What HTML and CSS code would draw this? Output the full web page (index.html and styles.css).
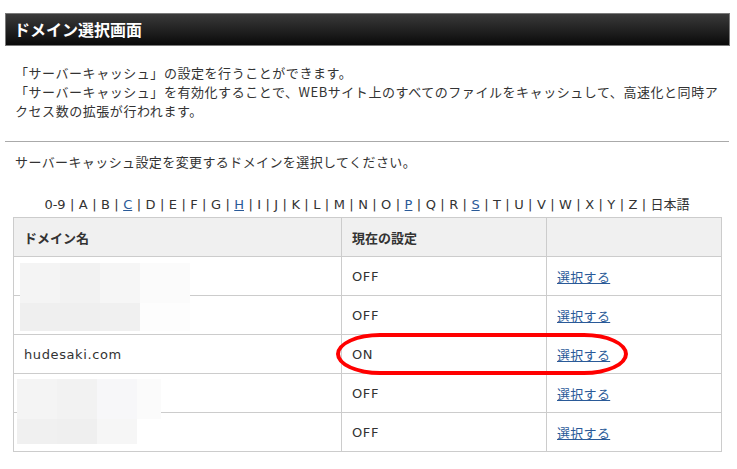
FILE: index.html
```html
<!DOCTYPE html>
<html lang="ja">
<head>
<meta charset="utf-8">
<link rel="stylesheet" href="styles.css">
</head>
<body>
<div class="page">
  <h1 class="title">ドメイン選択画面</h1>
  <p class="desc">「サーバーキャッシュ」の設定を行うことができます。<br>「サーバーキャッシュ」を有効化することで、WEBサイト上のすべてのファイルをキャッシュして、高速化と同時ア<br>クセス数の拡張が行われます。</p>
  <hr class="rule">
  <p class="lead">サーバーキャッシュ設定を変更するドメインを選択してください。</p>
  <div class="alpha">0-9 | A | B | <a href="#">C</a> | D | E | F | G | <a href="#">H</a> | I | J | K | L | M | N | O | <a href="#">P</a> | Q | R | <a href="#">S</a> | T | U | V | W | X | Y | Z | 日本語</div>
  <table class="domains">
    <colgroup><col class="c1"><col class="c2"><col class="c3"></colgroup>
    <thead>
      <tr><th>ドメイン名</th><th>現在の設定</th><th></th></tr>
    </thead>
    <tbody>
      <tr><td></td><td>OFF</td><td><a href="#">選択する</a></td></tr>
      <tr><td></td><td>OFF</td><td><a href="#">選択する</a></td></tr>
      <tr><td>hudesaki.com</td><td>ON</td><td><a href="#">選択する</a></td></tr>
      <tr><td></td><td>OFF</td><td><a href="#">選択する</a></td></tr>
      <tr><td></td><td>OFF</td><td><a href="#">選択する</a></td></tr>
    </tbody>
  </table>
  <div class="mosaic m1">
    <i class="a"></i><i class="b"></i><i class="c"></i><i class="d"></i>
    <i class="e"></i><i class="e"></i><i class="f"></i><i class="g"></i>
  </div>
  <div class="mosaic m2">
    <i class="a"></i><i class="b"></i><i class="h"></i><i class="d"></i>
    <i class="f"></i><i class="e"></i><i class="c"></i><i class="w"></i>
  </div>
  <div class="ring"></div>
</div>
</body>
</html>
```
FILE: styles.css
```css
html, body { margin: 0; padding: 0; background: #fff; }
body {
  font-family: "DejaVu Sans", "Noto Sans CJK JP", sans-serif;
  font-size: 13px;
  color: #333;
}
.page { position: relative; width: 737px; height: 469px; padding-top: 13px; box-sizing: border-box; }
.title {
  margin: 0 7px 0 5px;
  height: 31px;
  border: 1px solid #7a7a7a;
  background: linear-gradient(#3a3a3a, #0a0a0a);
  color: #fff;
  font-family: "Noto Sans CJK JP", sans-serif;
  font-size: 16px;
  font-weight: bold;
  line-height: 31px;
  padding-left: 8px;
}
.desc {
  margin: 17px 0 0 15px;
  line-height: 19px;
  font-family: "Noto Sans CJK JP", sans-serif;
  letter-spacing: 0.55px;
  white-space: nowrap;
}
.rule {
  margin: 21px 8px 0 5px;
  border: 0;
  border-top: 1px solid #aaa;
  height: 0;
}
.lead {
  margin: 10px 0 0 15px;
  line-height: 19px;
  font-family: "Noto Sans CJK JP", sans-serif;
  letter-spacing: 0.4px;
}
.alpha {
  margin: 24px 0 0 13px;
  width: 708px;
  text-align: center;
  line-height: 19px;
  font-size: 13px;
  word-spacing: 0.3px;
}
a { color: #2a5a98; text-decoration: underline; }
.domains {
  margin: 3px 0 0 13px;
  width: 708px;
  border-collapse: collapse;
  table-layout: fixed;
}
.c1 { width: 328px; }
.c2 { width: 205px; }
.c3 { width: 175px; }
.domains th, .domains td {
  border: 1px solid #ccc;
  height: 39px;
  padding: 0 10px;
  text-align: left;
  vertical-align: middle;
  box-sizing: border-box;
}
.domains th {
  background: #f0f0f0;
  font-family: "Noto Sans CJK JP", sans-serif;
  font-weight: bold;
  font-size: 13px;
}
.domains td { letter-spacing: 0.6px; }
.domains td a { font-family: "Noto Sans CJK JP", sans-serif; letter-spacing: 0.3px; }
.mosaic {
  position: absolute;
  display: grid;
}
.mosaic i { display: block; }
.m1 { left: 20px; top: 263px; grid-template-columns: 40px 40px 40px 50px; grid-template-rows: 40px 28px; }
.m2 { left: 17px; top: 379px; grid-template-columns: 40px 40px 40px 24px; grid-template-rows: 40px 25px; }
.a { background: #f4f4f4; }
.b { background: #f2f2f2; }
.c { background: #f6f6f6; }
.d { background: #fbfbfb; }
.e { background: #efefef; }
.f { background: #f0f0f0; }
.g { background: #fdfdfd; }
.h { background: #f7f7f9; }
.w { background: #fff; }
.ring {
  position: absolute;
  left: 336px;
  top: 333px;
  width: 292px;
  height: 42px;
  box-sizing: border-box;
  border: 4px solid #f00;
  border-radius: 44px / 21px;
}
```
